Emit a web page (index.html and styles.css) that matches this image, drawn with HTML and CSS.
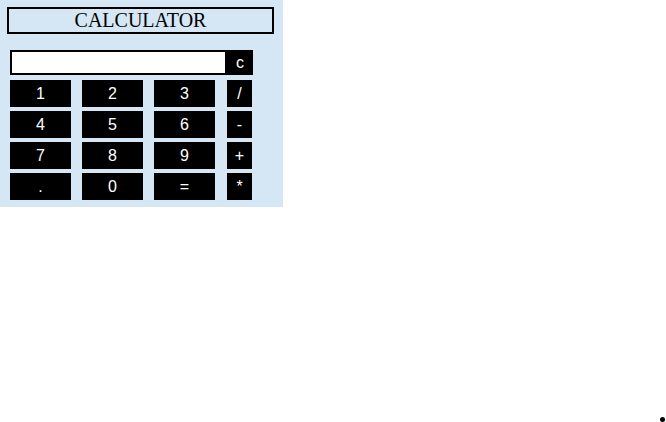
FILE: index.html
```html
<!DOCTYPE html>
<html>
<head>
<meta charset="utf-8">
<link rel="stylesheet" href="styles.css">
</head>
<body>
<div class="calc">
  <div class="title">CALCULATOR</div>
  <div class="display">
    <div class="screen"></div>
    <div class="key key-c">c</div>
  </div>
  <div class="keys">
    <div class="key">1</div><div class="key">2</div><div class="key">3</div><div class="key op">/</div>
    <div class="key">4</div><div class="key">5</div><div class="key">6</div><div class="key op">-</div>
    <div class="key">7</div><div class="key">8</div><div class="key">9</div><div class="key op">+</div>
    <div class="key">.</div><div class="key">0</div><div class="key">=</div><div class="key op">*</div>
  </div>
</div>
<span class="dot"></span>
</body>
</html>
```
FILE: styles.css
```css
html, body {
  margin: 0;
  padding: 0;
  background: #ffffff;
}
body {
  width: 666px;
  height: 422px;
  position: relative;
  overflow: hidden;
}
.calc {
  width: 283px;
  background: #d5e7f5;
  padding: 7px 0 7px 7px;
  box-sizing: border-box;
}
.title {
  width: 267px;
  height: 27px;
  box-sizing: border-box;
  border: 2px solid #000;
  text-align: center;
  font-family: "Liberation Serif", "Times New Roman", serif;
  font-size: 20px;
  line-height: 22px;
  color: #000;
}
.display {
  display: flex;
  margin: 16px 0 0 3px;
}
.screen {
  width: 217px;
  height: 25px;
  box-sizing: border-box;
  border: 2px solid #000;
  background: #fff;
}
.key {
  background: #000;
  color: #fff;
  font-family: "Liberation Sans", Arial, sans-serif;
  font-size: 16px;
  display: flex;
  align-items: center;
  justify-content: center;
  height: 27px;
}
.key-c {
  width: 26px;
  height: 25px;
}
.keys {
  display: grid;
  grid-template-columns: 61px 61px 61px 26px;
  column-gap: 11px;
  row-gap: 4px;
  margin: 5px 0 0 3px;
}
.keys .op {
  margin-left: 1px;
}
.dot {
  position: absolute;
  left: 660px;
  top: 417px;
  width: 5px;
  height: 5px;
  border-radius: 50%;
  background: #000;
}
```
